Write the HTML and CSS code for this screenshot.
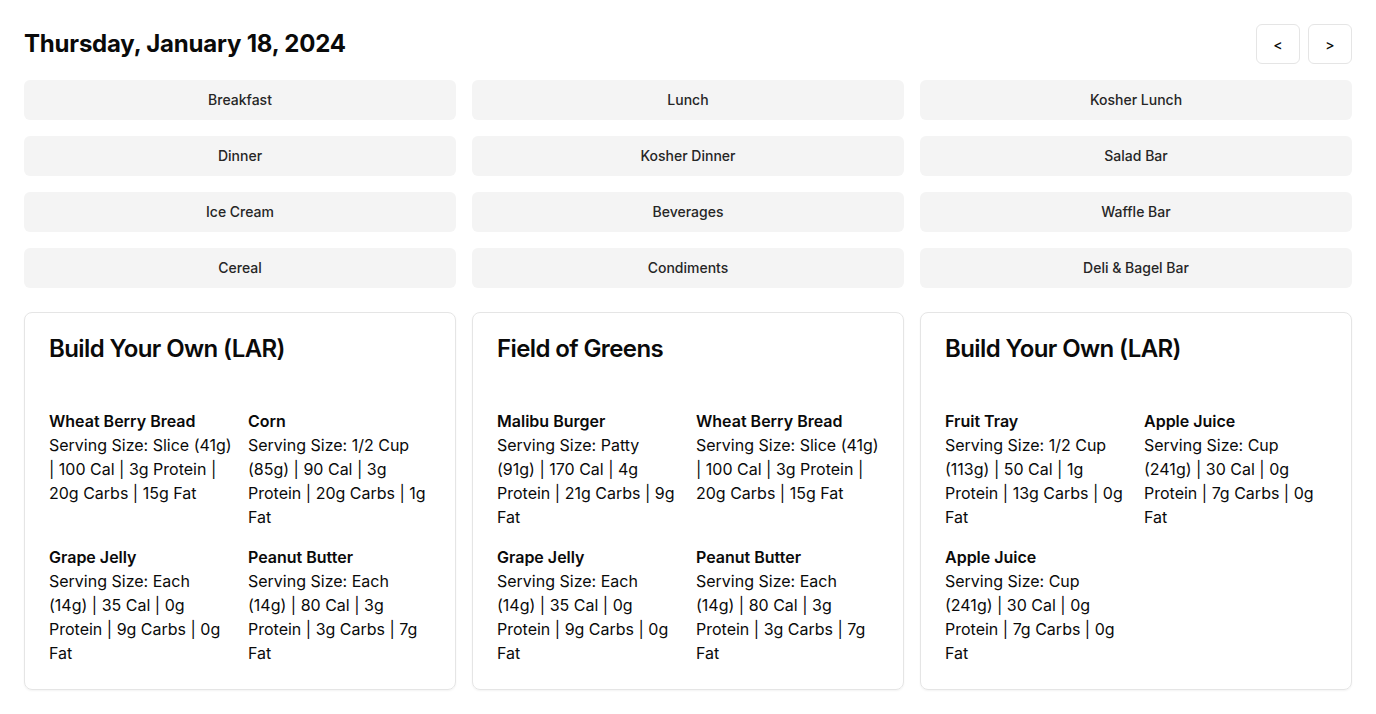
FILE: index.html
```html
<!DOCTYPE html>
<html>
<head>
<meta charset="utf-8">
<link rel="stylesheet" href="styles.css">
</head>
<body>
<div class="page">
  <header class="header">
    <h1 class="date">Thursday, January 18, 2024</h1>
    <div class="nav">
      <button class="nav-btn">&lt;</button>
      <button class="nav-btn">&gt;</button>
    </div>
  </header>
  <div class="meals">
    <button class="meal">Breakfast</button>
    <button class="meal">Lunch</button>
    <button class="meal">Kosher Lunch</button>
    <button class="meal">Dinner</button>
    <button class="meal">Kosher Dinner</button>
    <button class="meal">Salad Bar</button>
    <button class="meal">Ice Cream</button>
    <button class="meal">Beverages</button>
    <button class="meal">Waffle Bar</button>
    <button class="meal">Cereal</button>
    <button class="meal">Condiments</button>
    <button class="meal">Deli &amp; Bagel Bar</button>
  </div>
  <div class="cards">
    <section class="card">
      <h2 class="card-title">Build Your Own (LAR)</h2>
      <div class="items">
        <div class="item"><div class="item-name">Wheat Berry Bread</div><div class="item-info">Serving Size: Slice (41g) | 100 Cal | 3g Protein | 20g Carbs | 15g Fat</div></div>
        <div class="item"><div class="item-name">Corn</div><div class="item-info">Serving Size: 1/2 Cup (85g) | 90 Cal | 3g Protein | 20g Carbs | 1g Fat</div></div>
        <div class="item"><div class="item-name">Grape Jelly</div><div class="item-info">Serving Size: Each (14g) | 35 Cal | 0g Protein | 9g Carbs | 0g Fat</div></div>
        <div class="item"><div class="item-name">Peanut Butter</div><div class="item-info">Serving Size: Each (14g) | 80 Cal | 3g Protein | 3g Carbs | 7g Fat</div></div>
      </div>
    </section>
    <section class="card">
      <h2 class="card-title">Field of Greens</h2>
      <div class="items">
        <div class="item"><div class="item-name">Malibu Burger</div><div class="item-info">Serving Size: Patty (91g) | 170 Cal | 4g Protein | 21g Carbs | 9g Fat</div></div>
        <div class="item"><div class="item-name">Wheat Berry Bread</div><div class="item-info">Serving Size: Slice (41g) | 100 Cal | 3g Protein | 20g Carbs | 15g Fat</div></div>
        <div class="item"><div class="item-name">Grape Jelly</div><div class="item-info">Serving Size: Each (14g) | 35 Cal | 0g Protein | 9g Carbs | 0g Fat</div></div>
        <div class="item"><div class="item-name">Peanut Butter</div><div class="item-info">Serving Size: Each (14g) | 80 Cal | 3g Protein | 3g Carbs | 7g Fat</div></div>
      </div>
    </section>
    <section class="card">
      <h2 class="card-title">Build Your Own (LAR)</h2>
      <div class="items">
        <div class="item"><div class="item-name">Fruit Tray</div><div class="item-info">Serving Size: 1/2 Cup (113g) | 50 Cal | 1g Protein | 13g Carbs | 0g Fat</div></div>
        <div class="item"><div class="item-name">Apple Juice</div><div class="item-info">Serving Size: Cup (241g) | 30 Cal | 0g Protein | 7g Carbs | 0g Fat</div></div>
        <div class="item"><div class="item-name">Apple Juice</div><div class="item-info">Serving Size: Cup (241g) | 30 Cal | 0g Protein | 7g Carbs | 0g Fat</div></div>
      </div>
    </section>
  </div>
</div>
</body>
</html>
```
FILE: styles.css
```css
* { box-sizing: border-box; }
html, body { margin: 0; padding: 0; background: #fff; }
body {
  font-family: Inter, "Noto Sans", sans-serif;
  color: #0a0a0a;
}
.page {
  padding: 24px;
  display: flex;
  flex-direction: column;
}
.header {
  display: flex;
  justify-content: space-between;
  align-items: center;
  height: 40px;
}
.date {
  margin: 0;
  font-size: 24px;
  font-weight: 700;
  line-height: 32px;
  letter-spacing: -0.2px;
}
.nav { display: flex; gap: 8px; }
.nav-btn {
  width: 44px;
  height: 40px;
  border: 1px solid #e5e5e5;
  border-radius: 6px;
  background: #fff;
  font-family: inherit;
  font-size: 14px;
  font-weight: 500;
  color: #0a0a0a;
  padding: 0;
}
.meals {
  margin-top: 16px;
  display: grid;
  grid-template-columns: repeat(3, 1fr);
  gap: 16px;
}
.meal {
  height: 40px;
  border: none;
  border-radius: 6px;
  background: #f4f4f4;
  font-family: inherit;
  font-size: 14px;
  font-weight: 500;
  color: #262626;
  padding: 0 0 2px;
}
.cards {
  margin-top: 24px;
  display: grid;
  grid-template-columns: repeat(3, 1fr);
  gap: 16px;
  align-items: start;
}
.card {
  border: 1px solid #e5e5e5;
  border-radius: 8px;
  box-shadow: 0 1px 2px rgba(0,0,0,0.05);
  padding: 24px;
}
.card-title {
  margin: 0;
  font-size: 24px;
  line-height: 24px;
  font-weight: 600;
  letter-spacing: -0.6px;
}
.items {
  margin-top: 48px;
  display: grid;
  grid-template-columns: 1fr 1fr;
  column-gap: 16px;
  row-gap: 16px;
}
.item {
  font-size: 16px;
  line-height: 24px;
}
.item-name { font-weight: 600; }
.item-info { color: #0a0a0a; }
```
